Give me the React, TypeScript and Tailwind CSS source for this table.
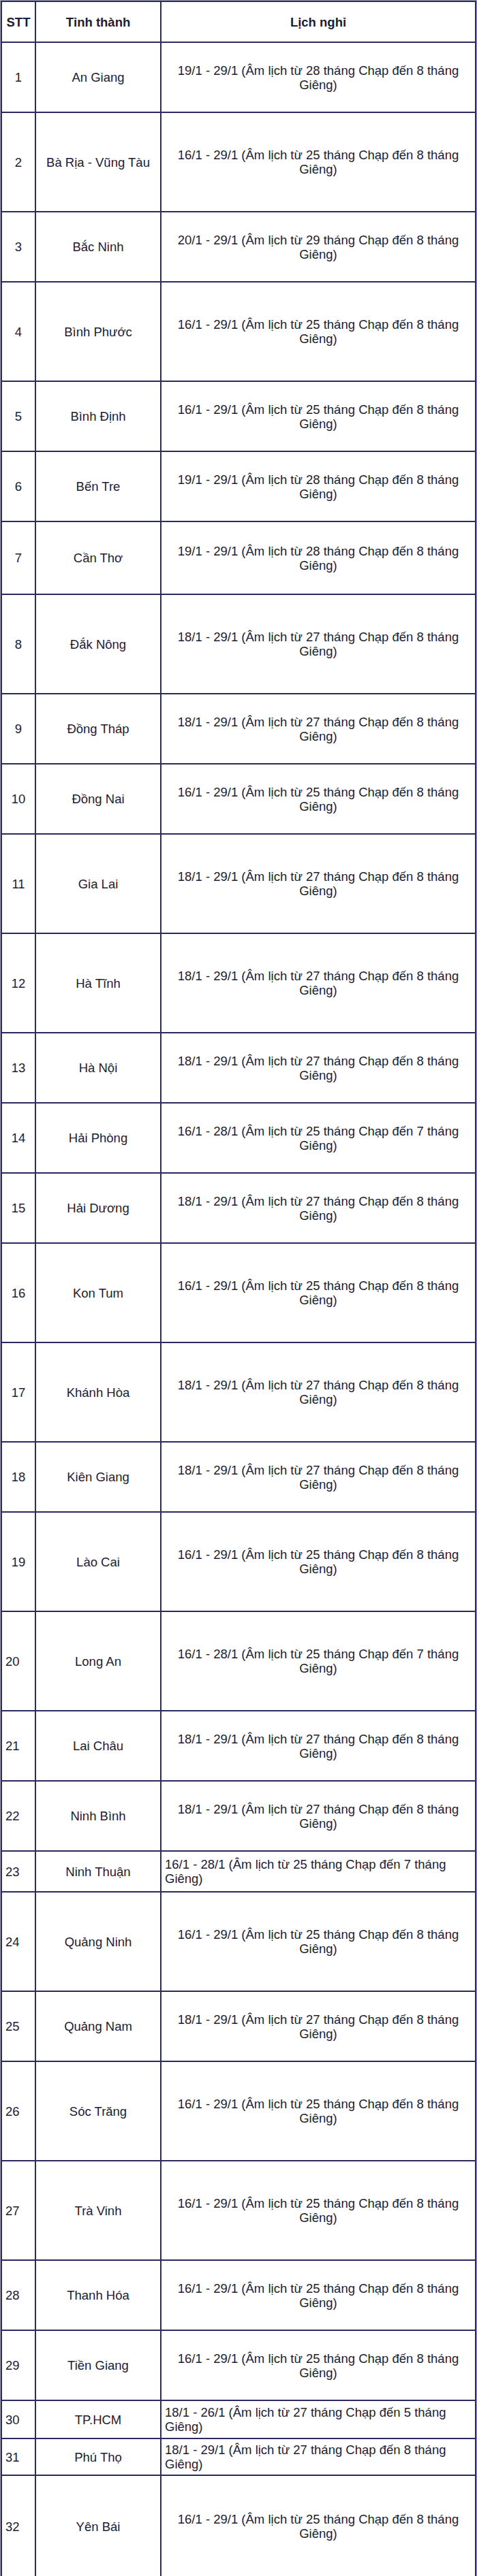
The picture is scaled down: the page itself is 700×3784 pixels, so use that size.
type Row = {
  stt: number;
  name: string;
  dates: string;
  h: string;
  sttLeft?: boolean;
  textLeft?: boolean;
};

const S = 'h-[103px]';
const T = 'h-[146px]';

const rows: Row[] = [
  { stt: 1, name: 'An Giang', dates: '19/1 - 29/1 (Âm lịch từ 28 tháng Chạp đến 8 tháng Giêng)', h: S },
  { stt: 2, name: 'Bà Rịa - Vũng Tàu', dates: '16/1 - 29/1 (Âm lịch từ 25 tháng Chạp đến 8 tháng Giêng)', h: T },
  { stt: 3, name: 'Bắc Ninh', dates: '20/1 - 29/1 (Âm lịch từ 29 tháng Chạp đến 8 tháng Giêng)', h: S },
  { stt: 4, name: 'Bình Phước', dates: '16/1 - 29/1 (Âm lịch từ 25 tháng Chạp đến 8 tháng Giêng)', h: T },
  { stt: 5, name: 'Bình Định', dates: '16/1 - 29/1 (Âm lịch từ 25 tháng Chạp đến 8 tháng Giêng)', h: S },
  { stt: 6, name: 'Bến Tre', dates: '19/1 - 29/1 (Âm lịch từ 28 tháng Chạp đến 8 tháng Giêng)', h: S },
  { stt: 7, name: 'Cần Thơ', dates: '19/1 - 29/1 (Âm lịch từ 28 tháng Chạp đến 8 tháng Giêng)', h: 'h-[107px]' },
  { stt: 8, name: 'Đắk Nông', dates: '18/1 - 29/1 (Âm lịch từ 27 tháng Chạp đến 8 tháng Giêng)', h: T },
  { stt: 9, name: 'Đồng Tháp', dates: '18/1 - 29/1 (Âm lịch từ 27 tháng Chạp đến 8 tháng Giêng)', h: S },
  { stt: 10, name: 'Đồng Nai', dates: '16/1 - 29/1 (Âm lịch từ 25 tháng Chạp đến 8 tháng Giêng)', h: S },
  { stt: 11, name: 'Gia Lai', dates: '18/1 - 29/1 (Âm lịch từ 27 tháng Chạp đến 8 tháng Giêng)', h: T },
  { stt: 12, name: 'Hà Tĩnh', dates: '18/1 - 29/1 (Âm lịch từ 27 tháng Chạp đến 8 tháng Giêng)', h: T },
  { stt: 13, name: 'Hà Nội', dates: '18/1 - 29/1 (Âm lịch từ 27 tháng Chạp đến 8 tháng Giêng)', h: S },
  { stt: 14, name: 'Hải Phòng', dates: '16/1 - 28/1 (Âm lịch từ 25 tháng Chạp đến 7 tháng Giêng)', h: S },
  { stt: 15, name: 'Hải Dương', dates: '18/1 - 29/1 (Âm lịch từ 27 tháng Chạp đến 8 tháng Giêng)', h: S },
  { stt: 16, name: 'Kon Tum', dates: '16/1 - 29/1 (Âm lịch từ 25 tháng Chạp đến 8 tháng Giêng)', h: T },
  { stt: 17, name: 'Khánh Hòa', dates: '18/1 - 29/1 (Âm lịch từ 27 tháng Chạp đến 8 tháng Giêng)', h: T },
  { stt: 18, name: 'Kiên Giang', dates: '18/1 - 29/1 (Âm lịch từ 27 tháng Chạp đến 8 tháng Giêng)', h: S },
  { stt: 19, name: 'Lào Cai', dates: '16/1 - 29/1 (Âm lịch từ 25 tháng Chạp đến 8 tháng Giêng)', h: T },
  { stt: 20, name: 'Long An', dates: '16/1 - 28/1 (Âm lịch từ 25 tháng Chạp đến 7 tháng Giêng)', h: T, sttLeft: true },
  { stt: 21, name: 'Lai Châu', dates: '18/1 - 29/1 (Âm lịch từ 27 tháng Chạp đến 8 tháng Giêng)', h: S, sttLeft: true },
  { stt: 22, name: 'Ninh Bình', dates: '18/1 - 29/1 (Âm lịch từ 27 tháng Chạp đến 8 tháng Giêng)', h: S, sttLeft: true },
  { stt: 23, name: 'Ninh Thuận', dates: '16/1 - 28/1 (Âm lịch từ 25 tháng Chạp đến 7 tháng Giêng)', h: 'h-[60px]', sttLeft: true, textLeft: true },
  { stt: 24, name: 'Quảng Ninh', dates: '16/1 - 29/1 (Âm lịch từ 25 tháng Chạp đến 8 tháng Giêng)', h: T, sttLeft: true },
  { stt: 25, name: 'Quảng Nam', dates: '18/1 - 29/1 (Âm lịch từ 27 tháng Chạp đến 8 tháng Giêng)', h: S, sttLeft: true },
  { stt: 26, name: 'Sóc Trăng', dates: '16/1 - 29/1 (Âm lịch từ 25 tháng Chạp đến 8 tháng Giêng)', h: T, sttLeft: true },
  { stt: 27, name: 'Trà Vinh', dates: '16/1 - 29/1 (Âm lịch từ 25 tháng Chạp đến 8 tháng Giêng)', h: T, sttLeft: true },
  { stt: 28, name: 'Thanh Hóa', dates: '16/1 - 29/1 (Âm lịch từ 25 tháng Chạp đến 8 tháng Giêng)', h: S, sttLeft: true },
  { stt: 29, name: 'Tiền Giang', dates: '16/1 - 29/1 (Âm lịch từ 25 tháng Chạp đến 8 tháng Giêng)', h: S, sttLeft: true },
  { stt: 30, name: 'TP.HCM', dates: '18/1 - 26/1 (Âm lịch từ 27 tháng Chạp đến 5 tháng Giêng)', h: 'h-[56px]', sttLeft: true, textLeft: true },
  { stt: 31, name: 'Phú Thọ', dates: '18/1 - 29/1 (Âm lịch từ 27 tháng Chạp đến 8 tháng Giêng)', h: 'h-[54px]', sttLeft: true, textLeft: true },
  { stt: 32, name: 'Yên Bái', dates: '16/1 - 29/1 (Âm lịch từ 25 tháng Chạp đến 8 tháng Giêng)', h: 'h-[150px]', sttLeft: true },
];

const cell = 'border-2 border-[#2a2a60] px-[5px] py-0 align-middle';

export default function App() {
  return (
    <div className="w-[700px] bg-white font-['Liberation_Sans',Arial,sans-serif] text-[18.5px] leading-[21px] text-[#1c1c34]">
      <div className="border border-[#a4a4b4]">
        <table className="w-full table-fixed border-collapse border-2 border-[#2a2a60]">
          <colgroup>
            <col className="w-[50px]" />
            <col className="w-[184px]" />
            <col />
          </colgroup>
          <thead>
            <tr className="h-[60px]">
              <th className={`${cell} text-center font-bold`}>STT</th>
              <th className={`${cell} text-center font-bold`}>Tỉnh thành</th>
              <th className={`${cell} text-center font-bold`}>Lịch nghỉ</th>
            </tr>
          </thead>
          <tbody>
            {rows.map((r) => (
              <tr key={r.stt} className={r.h}>
                <td className={`${cell} ${r.sttLeft ? 'text-left' : 'text-center'}`}>{r.stt}</td>
                <td className={`${cell} text-center`}>{r.name}</td>
                <td className={`${cell} ${r.textLeft ? 'text-left' : 'text-center'}`}>{r.dates}</td>
              </tr>
            ))}
          </tbody>
        </table>
      </div>
    </div>
  );
}
